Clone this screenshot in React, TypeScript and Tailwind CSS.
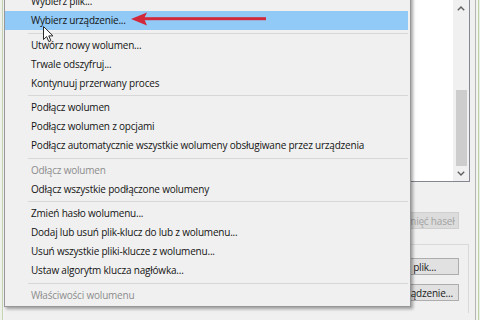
import React from 'react';

type Item = { label: string; disabled?: boolean; active?: boolean } | 'sep';

const MENU: Item[] = [
  { label: 'Wybierz plik...' },
  { label: 'Wybierz urządzenie...', active: true },
  'sep',
  { label: 'Utwórz nowy wolumen...' },
  { label: 'Trwale odszyfruj...' },
  { label: 'Kontynuuj przerwany proces' },
  'sep',
  { label: 'Podłącz wolumen' },
  { label: 'Podłącz wolumen z opcjami' },
  { label: 'Podłącz automatycznie wszystkie wolumeny obsługiwane przez urządzenia' },
  'sep',
  { label: 'Odłącz wolumen', disabled: true },
  { label: 'Odłącz wszystkie podłączone wolumeny' },
  'sep',
  { label: 'Zmień hasło wolumenu...' },
  { label: 'Dodaj lub usuń plik-klucz do lub z wolumenu...' },
  { label: 'Usuń wszystkie pliki-klucze z wolumenu...' },
  { label: 'Ustaw algorytm klucza nagłówka...' },
  'sep',
  { label: 'Właściwości wolumenu', disabled: true },
];

function Chevron({ up }: { up?: boolean }) {
  return (
    <svg width="8" height="5" viewBox="0 0 8 5" className={up ? '' : 'rotate-180'}>
      <path d="M0.8 4.2 L4 1 L7.2 4.2" fill="none" stroke="#606060" strokeWidth="1.4" />
    </svg>
  );
}

function WinButton({ label, disabled }: { label: string; disabled?: boolean }) {
  return (
    <div
      className={`w-[107px] h-[17px] flex items-center justify-center border text-[10px] leading-none tracking-[-0.2px] whitespace-nowrap ${
        disabled ? 'bg-[#dcdcdc] border-[#cfcfcf] text-[#a3a3a3]' : 'bg-[#e1e1e1] border-[#adadad] text-[#1a1a1a]'
      }`}
    >
      {label}
    </div>
  );
}

function App() {
  let sepIndex = 0;
  return (
    <div className="relative w-[480px] h-[320px] overflow-hidden bg-[#f0f0f0] font-['Open_Sans','Liberation_Sans',sans-serif] flex">
      {/* left window edge */}
      <div className="w-[4px] h-full flex">
        <div className="w-[2px] bg-[#eef1ea]" />
        <div className="w-[1px] bg-[#c3d3b4]" />
        <div className="w-[1px] bg-[#f4f4f4]" />
      </div>

      {/* dialog content behind the menu */}
      <div className="flex-1 flex flex-col items-end">
        {/* volume list with scrollbar */}
        <div className="w-[110px] h-[182px] bg-white border-r border-b border-[#828790] flex justify-end">
          <div className="w-[16px] h-full bg-[#f0f0f0] flex flex-col">
            <div className="h-[17px] flex items-center justify-center">
              <Chevron up />
            </div>
            <div className="flex-1 flex justify-center pt-[73px]">
              <div className="w-[11px] h-full bg-[#cdcdcd]" />
            </div>
            <div className="h-[15px] flex items-center justify-center">
              <Chevron />
            </div>
          </div>
        </div>

        <div className="mt-[30px] mr-[11px]">
          <WinButton label="Wyczyść pamięć haseł" disabled />
        </div>

        {/* volume group box */}
        <div className="mt-[15px] mr-[1px] w-[160px] h-[69px] border-t border-r border-[#d9d9d9] flex flex-col items-end pt-[13px] pr-[9px] gap-[9px]">
          <WinButton label="Wybierz plik..." />
          <WinButton label="Wybierz urządzenie..." />
        </div>
      </div>

      {/* right window edge */}
      <div className="w-[10px] h-full flex">
        <div className="w-[5px] bg-[#f0f0f0]" />
        <div className="w-[1px] bg-[#b4b4b4]" />
        <div className="w-[2px] bg-[#f3f5f0]" />
        <div className="w-[1px] bg-[#bcd2a9]" />
        <div className="w-[1px] bg-[#e9efe2]" />
      </div>

      {/* popup menu */}
      <div className="absolute left-[4px] top-[-10px] w-[407px] bg-[#f0f0f0] border border-[#979797] shadow-[2px_2px_3px_rgba(0,0,0,0.35)] pt-[1px] pb-[1px] pr-[2px] text-[10px] tracking-[-0.2px] text-[#141414]">
        {MENU.map((item, i) => {
          if (item === 'sep') {
            const h = sepIndex % 2 === 0 ? 'h-[6px]' : 'h-[5px]';
            sepIndex++;
            return (
              <div key={i} className={`${h} flex items-center pl-[23px]`}>
                <div className="w-full h-[1px] bg-[#d7d7d7]" />
              </div>
            );
          }
          return (
            <div
              key={i}
              className={`h-[19px] flex items-center pl-[26px] whitespace-nowrap ${
                item.active ? 'bg-[#91c9f7]' : ''
              } ${item.disabled ? 'text-[#8d8d8d]' : ''}`}
            >
              {item.label}
            </div>
          );
        })}
      </div>

      {/* red annotation arrow */}
      <svg className="absolute left-[130px] top-[11px]" width="137" height="16" viewBox="0 0 137 16">
        <polygon points="1,8 17,1.5 14,7.5 17,14.5" fill="#d1283a" />
        <rect x="13" y="6.2" width="123" height="3" fill="#d1283a" />
      </svg>

      {/* mouse cursor */}
      <svg className="absolute left-[43px] top-[26px]" width="12" height="17" viewBox="0 0 12 17">
        <path
          d="M0.5 0.5 L0.5 13.5 L3.6 10.6 L5.8 15.6 L7.9 14.7 L5.8 9.9 L10 9.9 Z"
          fill="#ffffff"
          stroke="#2a2a2a"
          strokeWidth="1"
          strokeLinejoin="round"
        />
      </svg>
    </div>
  );
}

export default App;
